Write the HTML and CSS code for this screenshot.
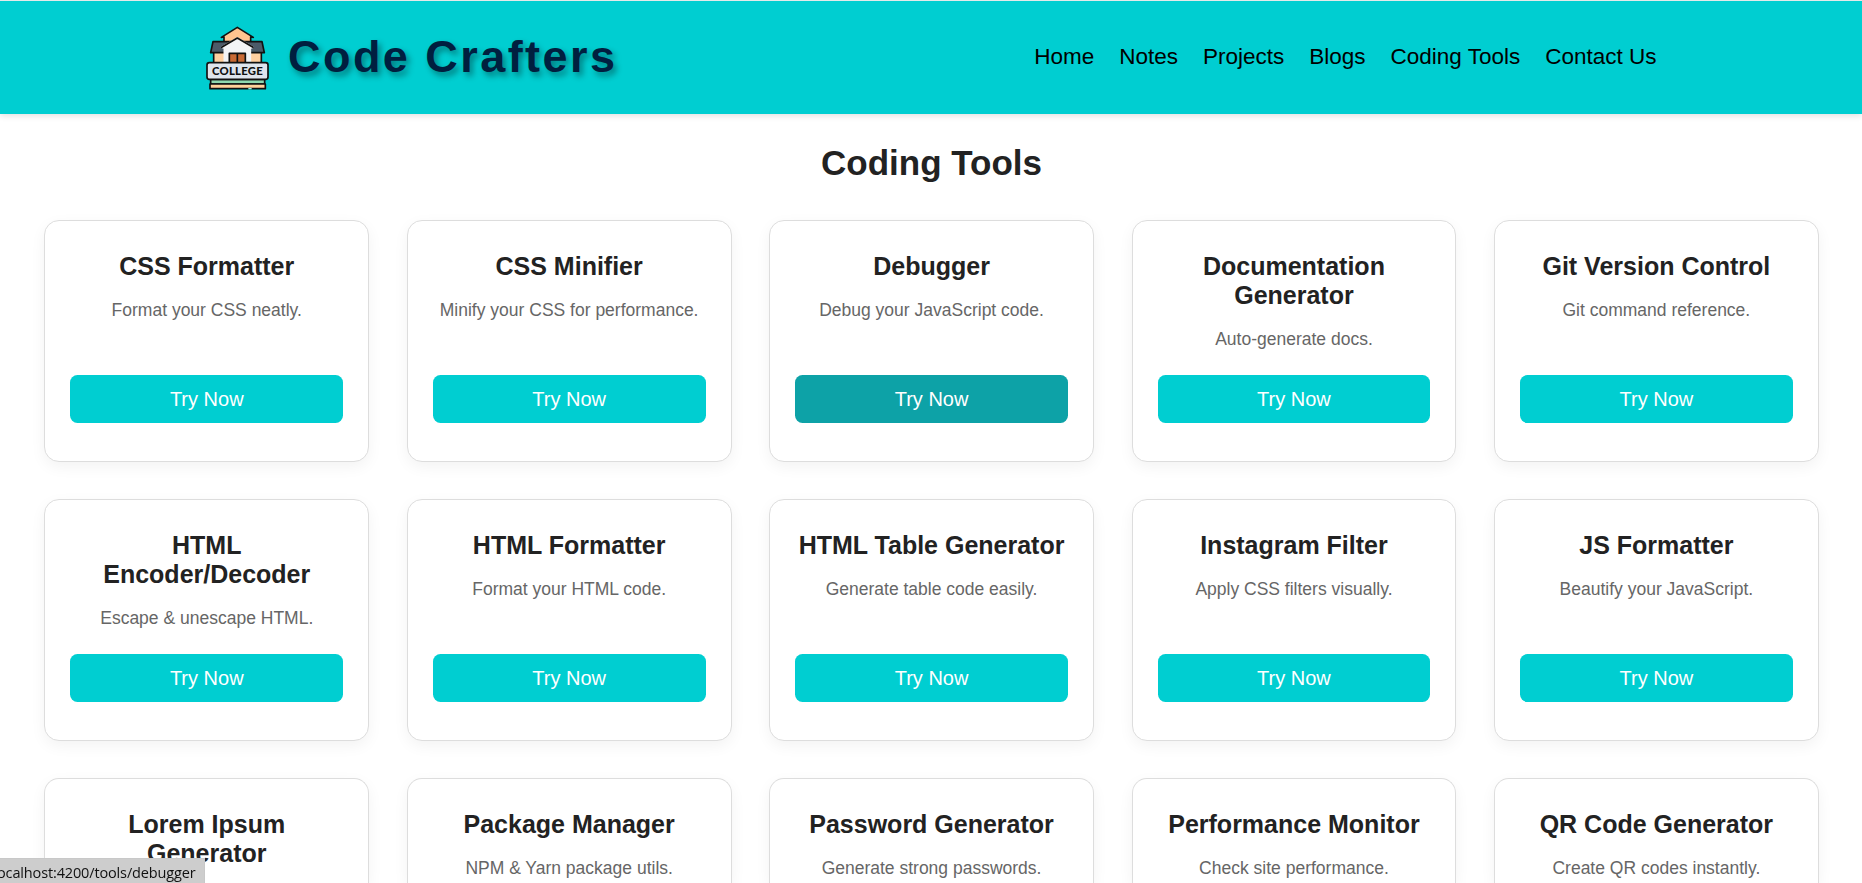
FILE: index.html
```html
<!DOCTYPE html>
<html lang="en">
<head>
<meta charset="utf-8">
<title>Code Crafters</title>
<link rel="stylesheet" href="styles.css">
</head>
<body>
<header class="header">
  <div class="header-inner">
    <a class="brand">
      <svg class="brand-icon" viewBox="50 76 189 192" aria-hidden="true">
        <g stroke="#111" stroke-width="5" stroke-linejoin="round" stroke-linecap="round">
          <path fill="#ffc48f" d="M104 124V108L96 110L144 80L192 110L184 108V124Z"/>
          <path fill="#ffd0a0" d="M73 154H216V188H73Z"/>
          <path fill="#4c5b69" d="M71 123H218L225 156H64Z"/>
          <path fill="#f3f4f6" stroke="#f3f4f6" d="M105 188V143L97 140L144 112L191 140L183 143V188Z"/>
          <path fill="none" d="M97 140L144 112L191 140"/>
          <path fill="#c96a35" d="M120 158H168V188H120ZM144 158V188"/>
          <path fill="#8fd9b0" d="M64 236H226V250H64Z"/>
          <path fill="#ffd19b" d="M62 250H228V264H62Z"/>
          <rect x="53" y="186" width="183" height="50" rx="7" fill="#dfe5ed"/>
        </g>
        <path d="M177 264H187" stroke="#8ff0e8" stroke-width="4"/>
        <text class="brand-sign" x="68" y="223" textLength="152">COLLEGE</text>
      </svg>
      <span class="brand-name">Code Crafters</span>
    </a>
    <nav class="nav">
      <a>Home</a><a>Notes</a><a>Projects</a><a>Blogs</a><a>Coding Tools</a><a>Contact Us</a>
    </nav>
  </div>
</header>
<main class="tools">
  <h1 class="page-title">Coding Tools</h1>
  <div class="grid">
    <article class="card"><h2 class="card-title">CSS Formatter</h2><p class="card-text">Format your CSS neatly.</p><a class="button">Try Now</a></article>
    <article class="card"><h2 class="card-title">CSS Minifier</h2><p class="card-text">Minify your CSS for performance.</p><a class="button">Try Now</a></article>
    <article class="card"><h2 class="card-title">Debugger</h2><p class="card-text">Debug your JavaScript code.</p><a class="button button-active">Try Now</a></article>
    <article class="card"><h2 class="card-title">Documentation Generator</h2><p class="card-text">Auto-generate docs.</p><a class="button">Try Now</a></article>
    <article class="card"><h2 class="card-title">Git Version Control</h2><p class="card-text">Git command reference.</p><a class="button">Try Now</a></article>
    <article class="card"><h2 class="card-title">HTML Encoder/Decoder</h2><p class="card-text">Escape &amp; unescape HTML.</p><a class="button">Try Now</a></article>
    <article class="card"><h2 class="card-title">HTML Formatter</h2><p class="card-text">Format your HTML code.</p><a class="button">Try Now</a></article>
    <article class="card"><h2 class="card-title">HTML Table Generator</h2><p class="card-text">Generate table code easily.</p><a class="button">Try Now</a></article>
    <article class="card"><h2 class="card-title">Instagram Filter</h2><p class="card-text">Apply CSS filters visually.</p><a class="button">Try Now</a></article>
    <article class="card"><h2 class="card-title">JS Formatter</h2><p class="card-text">Beautify your JavaScript.</p><a class="button">Try Now</a></article>
    <article class="card card-cut"><h2 class="card-title">Lorem Ipsum Generator</h2></article>
    <article class="card card-cut"><h2 class="card-title">Package Manager</h2><p class="card-text">NPM &amp; Yarn package utils.</p></article>
    <article class="card card-cut"><h2 class="card-title">Password Generator</h2><p class="card-text">Generate strong passwords.</p></article>
    <article class="card card-cut"><h2 class="card-title">Performance Monitor</h2><p class="card-text">Check site performance.</p></article>
    <article class="card card-cut"><h2 class="card-title">QR Code Generator</h2><p class="card-text">Create QR codes instantly.</p></article>
  </div>
</main>
<div class="status">ocalhost:4200/tools/debugger</div>
</body>
</html>
```
FILE: styles.css
```css
* { box-sizing: border-box; }
body {
  margin: 0;
  height: 883px;
  overflow: hidden;
  background: #fff;
  color: #222;
  font-family: "Liberation Sans", Arial, sans-serif;
}
.header {
  height: 114px;
  border-top: 1px solid #e4eaea;
  background: #00ced1;
  box-shadow: 0 2px 6px rgba(0, 0, 0, 0.12);
}
.header-inner {
  display: flex;
  justify-content: space-between;
  align-items: center;
  width: 1500px;
  height: 111px;
  margin: 0 auto;
  padding: 0 24.5px 0 25px;
}
.brand {
  display: flex;
  align-items: center;
  gap: 19px;
}
.brand-icon {
  width: 63px;
  height: 64px;
  margin-top: 2px;
}
.brand-sign {
  font-family: Lato, sans-serif;
  font-size: 34px;
  font-weight: 900;
  fill: #111;
}
.brand-name {
  font-size: 45px;
  font-weight: 700;
  letter-spacing: 2.45px;
  color: #001f3f;
  text-shadow: 3px 4px 6px rgba(0, 0, 0, 0.4);
}
.nav {
  display: flex;
  gap: 25px;
  font-size: 22.5px;
  color: #000;
}
.tools { padding: 29px 43.2px 0 44.3px; }
.page-title {
  margin: 0;
  font-size: 35px;
  line-height: 40px;
  text-align: center;
}
.grid {
  display: grid;
  grid-template-columns: repeat(5, minmax(0, 1fr));
  grid-template-rows: 242px 242px 105px;
  gap: 37px 37.5px;
  margin-top: 37px;
}
.card {
  display: flex;
  flex-direction: column;
  padding: 31px 25px 38px;
  border: 1px solid #ddd;
  border-radius: 15px;
  background: #fff;
  box-shadow: 0 5px 15px rgba(0, 0, 0, 0.05);
  text-align: center;
}
.card-cut {
  padding-bottom: 0;
  border-bottom: 0;
  border-radius: 15px 15px 0 0;
}
.card-title {
  margin: 0 0 19px;
  font-size: 25px;
  line-height: 29px;
}
.card-text {
  margin: 0;
  font-size: 17.5px;
  line-height: 20px;
  color: #666;
}
.button {
  height: 48px;
  margin-top: auto;
  border-radius: 7.5px;
  background: #00ced1;
  color: #fff;
  font-size: 20px;
  line-height: 48px;
}
.button-active { background: #0da2a7; }
.status {
  position: fixed;
  left: 0;
  bottom: 0;
  width: 205px;
  height: 25px;
  border-top: 1px solid #c8c8c8;
  border-right: 1px solid #c8c8c8;
  background: #cdcdcd;
  color: #111;
  font-family: "Open Sans", "Noto Sans", sans-serif;
  font-size: 14.5px;
  line-height: 27px;
  letter-spacing: -0.14px;
  text-indent: -3px;
  white-space: nowrap;
}
```
